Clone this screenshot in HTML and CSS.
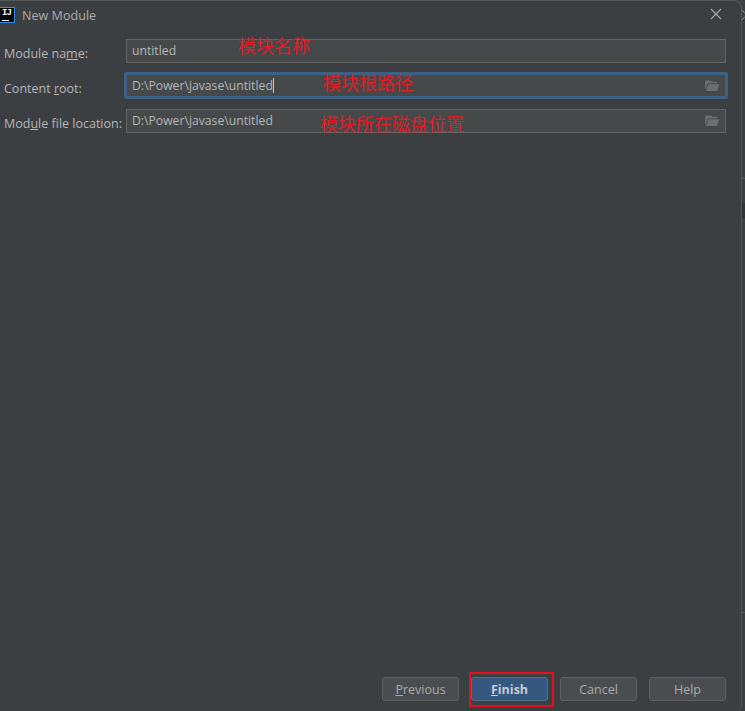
FILE: index.html
```html
<!DOCTYPE html>
<html lang="en">
<head>
    <meta charset="UTF-8">
    <title>New Module</title>
    <link rel="stylesheet" href="styles.css">
</head>
<body>
    <div class="dialog">
        <div class="titlebar">
            <div class="logo"><span class="logo-text">IJ</span><span class="logo-bar"></span></div>
            <span class="title">New Module</span>
            <svg class="close" width="12" height="12" viewBox="0 0 12 12"><path d="M1 1 L11 11 M11 1 L1 11" stroke="#a9abac" stroke-width="1.1" fill="none"/></svg>
        </div>

        <div class="form">
            <div class="row">
                <label>Module na<u>m</u>e:</label>
                <div class="field"><span class="value">untitled</span><span class="note note-name">模块名称</span></div>
            </div>
            <div class="row row-root">
                <label>Content <u>r</u>oot:</label>
                <div class="field focused">
                    <span class="value">D:\Power\javase\untitled</span><span class="caret"></span>
                    <span class="note note-root">模块根路径</span>
                    <svg class="folder" width="15" height="12" viewBox="0 0 16 13"><path d="M0 1.5 L1 0.5 H6 L7.5 2 H13 V3.5 H3 L0.5 10 H0 Z" fill="#6a6f72"/><path d="M3.5 4.5 H15.5 L13 12 H1 Z" fill="#6a6f72"/></svg>
                </div>
            </div>
            <div class="row row-file">
                <label>Mod<u>u</u>le file location:</label>
                <div class="field">
                    <span class="value">D:\Power\javase\untitled</span>
                    <span class="note note-file">模块所在磁盘位置</span>
                    <svg class="folder" width="15" height="12" viewBox="0 0 16 13"><path d="M0 1.5 L1 0.5 H6 L7.5 2 H13 V3.5 H3 L0.5 10 H0 Z" fill="#6a6f72"/><path d="M3.5 4.5 H15.5 L13 12 H1 Z" fill="#6a6f72"/></svg>
                </div>
            </div>
        </div>

        <div class="buttons">
            <button class="btn"><u>P</u>revious</button>
            <button class="btn btn-primary"><u>F</u>inish</button>
            <button class="btn">Cancel</button>
            <button class="btn">Help</button>
        </div>
    </div>

    <!-- sliver of the window behind the dialog -->
    <div class="behind">
        <svg class="behind-close" width="3" height="12" viewBox="0 0 3 12"><path d="M0 1 L3 4.5 M0 11 L3 7.5" stroke="#8a8c8d" stroke-width="1" fill="none"/></svg>
        <div class="behind-dark"></div>
        <div class="behind-line line-top"></div>
        <div class="behind-line line-bottom"></div>
    </div>
</body>
</html>
```

FILE: styles.css
```css
html, body {
    margin: 0;
    height: 100%;
    background: #3c3f41;
}
body {
    display: flex;
    font-family: "Open Sans", "Liberation Sans", sans-serif;
    font-size: 12.5px;
    color: #b4b6b8;
    overflow: hidden;
}
.dialog {
    display: flex;
    flex-direction: column;
    flex: none;
    width: 742px;
    height: 711px;
    box-sizing: border-box;
    background: #3c3f41;
    border-top: 1px solid #555759;
    border-right: 1px solid #555759;
    border-radius: 0 8px 6px 0;
}
.titlebar {
    display: flex;
    align-items: center;
    height: 28px;
}
.logo {
    position: relative;
    flex: none;
    width: 14px;
    height: 14px;
    margin: -1px 7px 0 -1px;
    background: #000;
    border: 1px solid #2f8fe6;
}
.logo-text {
    position: absolute;
    left: 2px;
    top: 1px;
    color: #fff;
    font: bold 9px/9px "Liberation Mono", monospace;
    letter-spacing: -1px;
}
.logo-bar {
    position: absolute;
    left: 2px;
    bottom: 1px;
    width: 7px;
    height: 1px;
    background: #fff;
}
.title {
    font-size: 12.6px;
    color: #a9abad;
}
.close {
    margin: -2px 19px 0 auto;
}
.form {
    padding: 10px 15px 0 4px;
}
.row {
    display: flex;
    align-items: center;
}
.row label {
    flex: none;
    width: 122px;
    padding-top: 5px;
    white-space: nowrap;
}
.row-root {
    margin-top: 9px;
}
.row-file {
    margin-top: 10px;
}
.field {
    position: relative;
    flex: 1;
    box-sizing: border-box;
    height: 24px;
    display: flex;
    align-items: center;
    padding-left: 5px;
    padding-bottom: 2px;
    background: #45494a;
    border: 1px solid #646464;
    font-size: 12.2px;
}
.field.focused {
    height: 27px;
    margin: 0 -2px;
    padding-bottom: 1px;
    border: 3px solid #3d6185;
    border-radius: 2px;
}
.value {
    color: #b4b6b8;
}
.caret {
    width: 1px;
    height: 15px;
    background: #c8c8c8;
}
.note {
    position: absolute;
    color: #e21b24;
    font-family: "Noto Sans CJK SC", sans-serif;
    font-size: 18px;
    line-height: 24px;
    white-space: nowrap;
}
.note-name {
    left: 111px;
    top: -7px;
}
.note-root {
    left: 196px;
    top: -5px;
}
.note-file {
    left: 193px;
    top: 1px;
}
.folder {
    position: absolute;
    right: 5px;
    top: 5px;
}
.buttons {
    display: flex;
    gap: 12px;
    margin-top: auto;
    padding: 0 0 10px 382px;
}
.btn {
    position: relative;
    width: 77px;
    height: 24px;
    padding: 0;
    background: #4a4d4f;
    border: 1px solid #5e6060;
    border-radius: 3px;
    color: #a9abad;
    font: 12.5px "Open Sans", "Liberation Sans", sans-serif;
}
.btn-primary {
    background: #365880;
    border-color: #4c708c;
    color: #c5cdd6;
    font-weight: bold;
}
/* red annotation box drawn over the screenshot */
.btn-primary::after {
    content: "";
    position: absolute;
    left: -3px;
    right: -7px;
    top: -6px;
    bottom: -7px;
    border: 2px solid #e3111f;
}
.behind {
    position: relative;
    flex: 1;
    background: #3c3f41;
}
.behind-close {
    position: absolute;
    left: 0;
    top: 9px;
}
.behind-dark {
    position: absolute;
    left: 0;
    right: 0;
    top: 203px;
    height: 15px;
    background: #313335;
}
.behind-line {
    position: absolute;
    left: 0;
    right: 0;
    height: 1px;
    background: #515355;
}
.line-top {
    top: 178px;
}
.line-bottom {
    top: 612px;
}
```
